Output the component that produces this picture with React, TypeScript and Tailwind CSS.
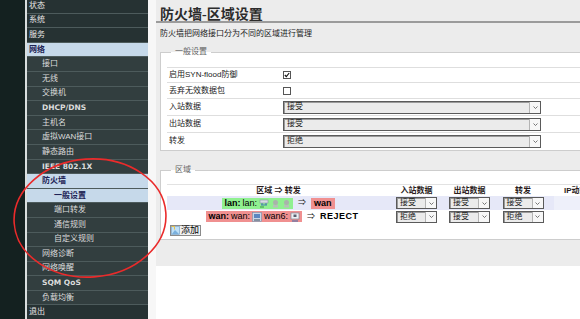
import { ReactNode } from "react"

interface MenuItem {
  label: string
  level: 0 | 1 | 2
  active?: boolean
  latin?: boolean
}

const menu: MenuItem[] = [
  { label: "状态", level: 0 },
  { label: "系统", level: 0 },
  { label: "服务", level: 0 },
  { label: "网络", level: 0, active: true },
  { label: "接口", level: 1 },
  { label: "无线", level: 1 },
  { label: "交换机", level: 1 },
  { label: "DHCP/DNS", level: 1, latin: true },
  { label: "主机名", level: 1 },
  { label: "虚拟WAN接口", level: 1 },
  { label: "静态路由", level: 1 },
  { label: "IEEE 802.1X", level: 1, latin: true },
  { label: "防火墙", level: 1, active: true },
  { label: "一般设置", level: 2, active: true },
  { label: "端口转发", level: 2 },
  { label: "通信规则", level: 2 },
  { label: "自定义规则", level: 2 },
  { label: "网络诊断", level: 1 },
  { label: "网络唤醒", level: 1 },
  { label: "SQM QoS", level: 1, latin: true },
  { label: "负载均衡", level: 1 },
  { label: "退出", level: 0 },
]

function Sidebar() {
  return (
    <div className="w-[121px] bg-[#2a3637] flex flex-col -mt-[1px]">
      {menu.map((item) => {
        const pad = item.level === 0 ? "pl-[2px]" : item.level === 1 ? "pl-[15px]" : "pl-[27px]"
        const bg = item.active
          ? "bg-[#c6d9ea] text-[#1e2456] font-bold"
          : item.level === 0
          ? "bg-[#263233] text-[#e6e6e6]"
          : "bg-[#323e3f] text-[#dcdcdc]"
        const font = item.latin ? "font-['DejaVu_Sans','Noto_Sans_CJK_SC',sans-serif] font-bold text-[7.5px]" : "text-[8px]"
        return (
          <div
            key={item.label}
            className={`h-[14.6px] shrink-0 flex items-center border-b border-[#4d5b5c] leading-none ${pad} ${bg} ${font}`}
          >
            {item.label}
          </div>
        )
      })}
    </div>
  )
}

function Select({ value, wide }: { value: string; wide?: boolean }) {
  return (
    <div
      className={`${wide ? "w-[258px] h-[13px]" : "w-[41px] h-[12px]"} flex border border-[#5a5a5a] bg-[#ebebeb] shadow-[inset_1px_1px_0_#9a9a9a]`}
    >
      <span className="flex-1 pl-[3px] text-[8px] leading-none flex items-center text-[#222]">{value}</span>
      <span className="w-[11px] border-l border-[#b4b4b4] bg-[#f7f7f7] flex items-center justify-center">
        <svg width="5" height="3" viewBox="0 0 5 3">
          <path d="M0.5 0.5 L2.5 2.5 L4.5 0.5" fill="none" stroke="#555" strokeWidth="0.8" />
        </svg>
      </span>
    </div>
  )
}

function Checkbox({ checked }: { checked?: boolean }) {
  return (
    <div className="w-[8px] h-[8px] border border-[#555] bg-white flex items-center justify-center">
      {checked && (
        <svg width="6" height="6" viewBox="0 0 6 6">
          <path d="M0.8 3 L2.3 4.6 L5.2 1" fill="none" stroke="#111" strokeWidth="1.1" />
        </svg>
      )}
    </div>
  )
}

function FormRow({ label, h, children }: { label: string; h: string; children: ReactNode }) {
  return (
    <div className={`${h} flex items-center border-t border-[#dedede]`}>
      <span className="w-[116px] pl-[2px] text-[8px] leading-none text-[#222]">{label}</span>
      {children}
    </div>
  )
}

function Section({ title, className, children }: { title: string; className: string; children: ReactNode }) {
  return (
    <fieldset className={`ml-[4px] w-[440px] border border-[#cdcdcd] bg-white px-[6px] ${className}`}>
      <legend className="ml-[4px] px-[4px] text-[8px] leading-none text-[#666]">{title}</legend>
      {children}
    </fieldset>
  )
}

function IfaceIcon({ tone }: { tone: "blue" | "gray" | "bridge" | "wan6" }) {
  if (tone === "bridge") {
    return (
      <svg width="10" height="9" viewBox="0 0 10 9">
        <rect x="1" y="1" width="8" height="3" fill="#d8dde4" stroke="#8a95a4" strokeWidth="0.6" />
        <path d="M2 6 h6 M3 4 v2 M7 4 v2" stroke="#3a6fb0" strokeWidth="0.9" />
        <path d="M1 8 h4" stroke="#2f8a3a" strokeWidth="0.9" />
      </svg>
    )
  }
  if (tone === "gray") {
    return (
      <svg width="9" height="9" viewBox="0 0 9 9">
        <circle cx="4.5" cy="3.5" r="2.5" fill="#a9b3ab" />
        <rect x="2" y="6" width="5" height="2.5" fill="#b8bfb9" />
      </svg>
    )
  }
  if (tone === "wan6") {
    return (
      <svg width="10" height="10" viewBox="0 0 10 10">
        <rect x="1" y="1" width="8" height="6" fill="#eef0f3" stroke="#7c8696" strokeWidth="0.7" />
        <rect x="3.5" y="2.5" width="3" height="2.5" fill="#5a6070" />
        <path d="M2 9 h6" stroke="#3a6fb0" strokeWidth="1" />
      </svg>
    )
  }
  return (
    <svg width="10" height="10" viewBox="0 0 10 10">
      <rect x="0.5" y="0.5" width="9" height="9" fill="#c9d6e6" stroke="#7b8ca6" strokeWidth="0.6" />
      <rect x="2" y="2" width="6" height="4" fill="#5d86c0" />
      <path d="M2 8 h6" stroke="#3d4a5c" strokeWidth="1" />
    </svg>
  )
}

export default function App() {
  return (
    <div className="relative w-[580px] h-[319px] overflow-hidden bg-white flex font-['Liberation_Sans','Noto_Sans_CJK_SC',sans-serif]">
      <div className="w-[25px] bg-[#142120]" />
      <div className="w-[2px] bg-[#d9dede]" />
      <Sidebar />
      <div className="w-[8px] bg-[#f7f7f7]" />

      <div className="flex-1 flex flex-col min-w-0">
        <div className="h-[266px] bg-[#ececec] overflow-hidden">
          <h2 className="h-[23px] border-b-2 border-[#9b9b9b] pl-[4px] pt-[8px] text-[14px] leading-none text-[#2c2c2c] font-bold font-['Liberation_Serif','Noto_Sans_CJK_SC',serif]">
            防火墙-区域设置
          </h2>
          <p className="mt-[7px] pl-[4px] text-[8px] leading-none text-[#222]">防火墙把网络接口分为不同的区域进行管理</p>

          <Section title="一般设置" className="mt-[10px] pt-[11px] pb-[1px]">
            <FormRow label="启用SYN-flood防御" h="h-[15px]">
              <Checkbox checked />
            </FormRow>
            <FormRow label="丢弃无效数据包" h="h-[16px]">
              <Checkbox />
            </FormRow>
            <FormRow label="入站数据" h="h-[17px]">
              <Select value="接受" wide />
            </FormRow>
            <FormRow label="出站数据" h="h-[17px]">
              <Select value="接受" wide />
            </FormRow>
            <FormRow label="转发" h="h-[17px]">
              <Select value="拒绝" wide />
            </FormRow>
          </Section>

          <Section title="区域" className="mt-[15px] pt-[10px] pb-[3px]">
            <div className="h-[12px] flex items-center border-t border-[#e2e2e2] text-[8px] leading-none font-bold text-[#2a1c1c]">
              <span className="w-[223px] text-center">区域 ⇒ 转发</span>
              <span className="w-[53px] text-center">入站数据</span>
              <span className="w-[53px] text-center">出站数据</span>
              <span className="w-[54px] text-center">转发</span>
              <span className="pl-[14px] whitespace-nowrap">IP动态伪装</span>
            </div>

            <div className="h-[14px] flex items-center bg-[#e6e8f8]">
              <div className="w-[223px] flex items-center justify-center gap-[5px] text-[9px] leading-none">
                <span className="h-[11px] px-[2px] flex items-center gap-[2px] bg-[#90f090]">
                  <b>lan:</b>
                  <span>lan:</span>
                  <IfaceIcon tone="bridge" />
                  <IfaceIcon tone="gray" />
                  <IfaceIcon tone="gray" />
                </span>
                <span className="text-[8px] text-[#222]">⇒</span>
                <span className="h-[11px] px-[3px] flex items-center bg-[#f09090] font-bold">wan</span>
              </div>
              <div className="w-[53px] flex justify-center"><Select value="接受" /></div>
              <div className="w-[53px] flex justify-center"><Select value="接受" /></div>
              <div className="w-[54px] flex justify-center"><Select value="接受" /></div>
              <div className="flex-1 h-full ml-[4px] bg-[#eef0fa]" />
            </div>

            <div className="h-[13px] flex items-center">
              <div className="w-[223px] pl-[8px] flex items-center justify-center gap-[5px] text-[9px] leading-none">
                <span className="h-[11px] px-[2px] flex items-center gap-[2px] bg-[#f09090]">
                  <b>wan:</b>
                  <span>wan:</span>
                  <IfaceIcon tone="blue" />
                  <span>wan6:</span>
                  <IfaceIcon tone="wan6" />
                </span>
                <span className="text-[8px] text-[#222]">⇒</span>
                <span className="font-bold tracking-[0.5px]">REJECT</span>
              </div>
              <div className="w-[53px] flex justify-center"><Select value="拒绝" /></div>
              <div className="w-[53px] flex justify-center"><Select value="接受" /></div>
              <div className="w-[54px] flex justify-center"><Select value="拒绝" /></div>
            </div>

            <div className="mt-[2px] ml-[3px] w-fit h-[11px] pr-[1px] flex items-center gap-[1px] border border-[#8a8a8a] bg-[#f0f0f0] text-[9px] leading-none whitespace-nowrap">
              <svg width="9" height="9" viewBox="0 0 9 9">
                <rect x="0.5" y="0.5" width="8" height="8" fill="#bfe0f7" stroke="#6c9ac4" strokeWidth="0.6" />
                <path d="M1 8 L4 4 L8 8 Z" fill="#7ab0dd" />
                <path d="M0.5 0.5 h3 v3" stroke="#e8c14a" strokeWidth="1" fill="none" />
              </svg>
              <span>添加</span>
            </div>
          </Section>
        </div>
      </div>

      <svg className="absolute left-0 top-0 pointer-events-none" width="580" height="319" viewBox="0 0 580 319">
        <ellipse cx="90" cy="218" rx="76" ry="59" transform="rotate(-4 90 218)" fill="none" stroke="#ea2b2b" strokeWidth="1.6" />
      </svg>
    </div>
  )
}
